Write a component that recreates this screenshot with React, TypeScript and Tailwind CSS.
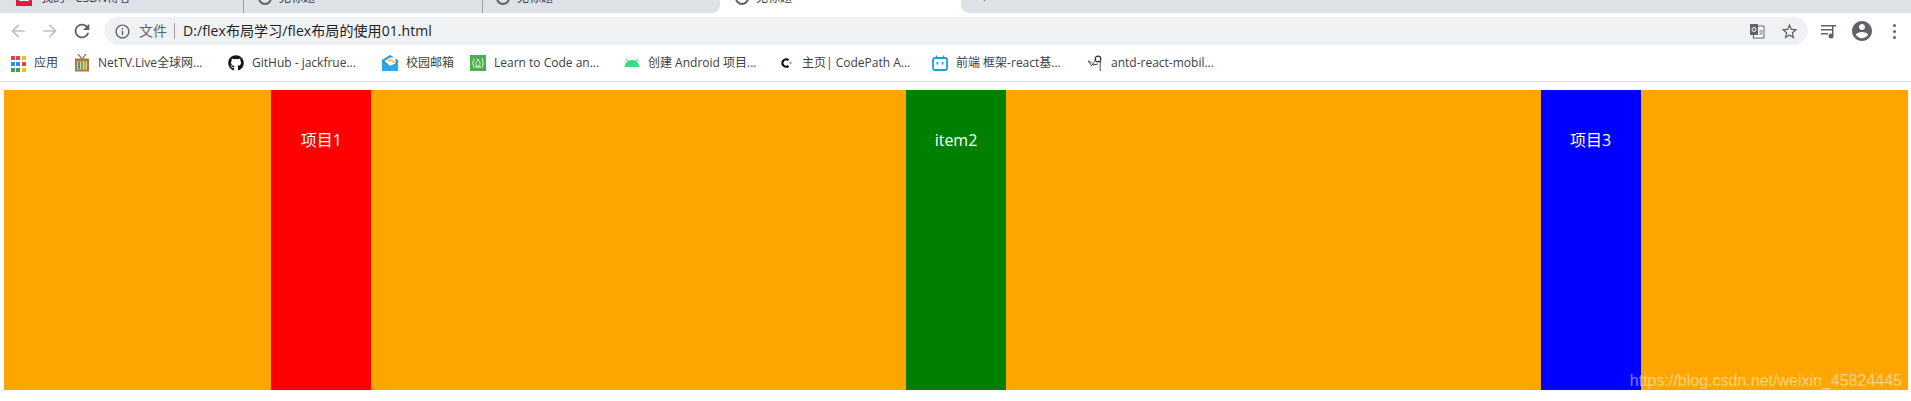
import * as React from "react";
import { FaGithub } from "react-icons/fa";

const uiFont = "font-['Open_Sans','Noto_Sans_CJK_SC',sans-serif]";

function Glyph({ d, size = 16, className = "" }: { d: string; size?: number; className?: string }) {
  return (
    <svg width={size} height={size} viewBox="0 0 24 24" fill="currentColor" className={className}>
      <path d={d} />
    </svg>
  );
}

const arrowLeft = "M20 11H7.83l5.59-5.59L12 4l-8 8 8 8 1.41-1.41L7.83 13H20v-2z";
const arrowRight = "M4 11h12.17l-5.59-5.59L12 4l8 8-8 8-1.41-1.41L16.17 13H4v-2z";
const reload =
  "M17.65 6.35C16.2 4.9 14.21 4 12 4c-4.42 0-7.99 3.58-7.99 8s3.57 8 7.99 8c3.73 0 6.84-2.55 7.73-6h-2.08c-.82 2.33-3.04 4-5.65 4-3.31 0-6-2.69-6-6s2.69-6 6-6c1.66 0 3.14.69 4.22 1.78L13 11h7V4l-2.35 2.35z";
const info =
  "M11 7h2v2h-2zm0 4h2v6h-2zm1-9C6.48 2 2 6.48 2 12s4.48 10 10 10 10-4.48 10-10S17.52 2 12 2zm0 18c-4.41 0-8-3.59-8-8s3.59-8 8-8 8 3.59 8 8-3.59 8-8 8z";
const star =
  "M22 9.24l-7.19-.62L12 2 9.19 8.63 2 9.24l5.46 4.73L5.82 21 12 17.27 18.18 21l-1.63-7.03L22 9.24zM12 15.4l-3.76 2.27 1-4.28-3.32-2.88 4.38-.38L12 6.1l1.71 4.04 4.38.38-3.32 2.88 1 4.28L12 15.4z";
const account =
  "M12 2C6.48 2 2 6.48 2 12s4.48 10 10 10 10-4.48 10-10S17.52 2 12 2zm0 3c1.66 0 3 1.34 3 3s-1.34 3-3 3-3-1.34-3-3 1.34-3 3-3zm0 14.2c-2.5 0-4.71-1.28-6-3.22.03-1.99 4-3.08 6-3.08 1.99 0 5.97 1.09 6 3.08-1.29 1.94-3.5 3.22-6 3.22z";

function TranslateIcon() {
  return (
    <svg width="16" height="16" viewBox="0 0 16 16">
      <path d="M7 3h8v12H4z" fill="#fff" stroke="#5f6368" strokeWidth="1" />
      <rect x="1" y="1" width="8" height="11" fill="#5f6368" />
      <circle cx="5" cy="6.5" r="2" fill="none" stroke="#fff" strokeWidth="1" />
      <path d="M10 8h4M12 7v1M10.5 12l3-3M10.5 9l3 3" stroke="#5f6368" strokeWidth="0.8" fill="none" />
    </svg>
  );
}

function QueueIcon() {
  return (
    <svg width="16" height="16" viewBox="0 0 16 16" fill="#5f6368">
      <rect x="0" y="2" width="11" height="1.5" />
      <rect x="0" y="6" width="11" height="1.5" />
      <rect x="0" y="10" width="7" height="1.5" />
      <rect x="11" y="2" width="1.5" height="11" />
      <rect x="11" y="2" width="4" height="1.5" />
      <circle cx="10" cy="13" r="2.5" />
    </svg>
  );
}

function AppsIcon() {
  const colors = ["#ea4335", "#ea4335", "#fbbc04", "#4285f4", "#4285f4", "#ea4335", "#34a853", "#34a853", "#fbbc04"];
  return (
    <div className="grid grid-cols-3 gap-[2px] w-[14px] h-[14px]">
      {colors.map((c, i) => (
        <svg key={i} width="4" height="4">
          <rect width="4" height="4" fill={c} />
        </svg>
      ))}
    </div>
  );
}

function TvIcon() {
  return (
    <svg width="16" height="18" viewBox="0 0 16 18">
      <path d="M4 0l4 5 4-5" stroke="#7a6a45" strokeWidth="1.2" fill="none" />
      <rect x="1" y="4.5" width="14" height="13" fill="#a87a3c" />
      <rect x="3" y="7.5" width="10" height="8" fill="#d9d2a8" />
      <rect x="4" y="8" width="2" height="7" fill="#4f8fb0" />
      <rect x="7" y="8" width="2" height="7" fill="#7ba84a" />
      <rect x="10" y="8" width="2" height="7" fill="#d9a63c" />
    </svg>
  );
}

function MailIcon() {
  return (
    <svg width="16" height="16" viewBox="0 0 16 16">
      <path d="M0 5L8 0l8 5v11H0z" fill="#1d9be6" />
      <path d="M2.500 6L8 2.500h5.500v6L8 11z" fill="#ffffff" />
      <path d="M6 6c3-2 5-1 6 2" stroke="#f5b52e" strokeWidth="1.6" fill="none" />
      <path d="M0 7l8 5 8-5v9H0z" fill="#2ba7ef" />
    </svg>
  );
}

function LearnIcon() {
  return (
    <svg width="16" height="16" viewBox="0 0 16 16">
      <rect width="16" height="16" fill="#4caf50" />
      <path d="M4 3.5L2.8 8 4 12.5M12 3.5L13.2 8 12 12.5" stroke="#fff" strokeWidth="0.9" fill="none" />
      <path d="M8 4c.6 2 2 2.6 2 4.6S8.8 11 8 11s-2-.6-2-2.4C6 7 7.4 6.2 8 4z" fill="none" stroke="#fff" strokeWidth="0.9" />
      <rect x="5" y="11.5" width="6" height="1" fill="#fff" />
    </svg>
  );
}

function AndroidIcon() {
  return (
    <svg width="16" height="16" viewBox="0 0 16 16">
      <path d="M0.5 12C1 7.5 4 5 8 5s7 2.500 7.500 7z" fill="#3ddc84" />
      <path d="M4 6.500L2.500 4M12 6.500L13.500 4" stroke="#3ddc84" strokeWidth="1" />
    </svg>
  );
}

function CodePathIcon() {
  return (
    <svg width="16" height="16" viewBox="0 0 16 16">
      <path d="M10.500 5.200A3.700 3.700 0 1 0 10.500 10.800" stroke="#111" strokeWidth="2.200" fill="none" />
      <circle cx="12.500" cy="8" r="1.300" fill="#5fd0a0" />
    </svg>
  );
}

function BiliIcon() {
  return (
    <svg width="16" height="16" viewBox="0 0 16 16">
      <path d="M4 0.500L5.500 3M12 0.500L10.500 3" stroke="#1a9fd9" strokeWidth="1.300" />
      <rect x="1" y="3" width="14" height="12" rx="2" fill="none" stroke="#1a9fd9" strokeWidth="1.800" />
      <rect x="4.500" y="7" width="1.800" height="2.500" fill="#1a9fd9" />
      <rect x="9.700" y="7" width="1.800" height="2.500" fill="#1a9fd9" />
    </svg>
  );
}

function AntIcon() {
  return (
    <svg width="16" height="18" viewBox="0 0 16 18">
      <path d="M1 7c2 0 4 2 5 4 1-2 1-3 3-6" stroke="#555" strokeWidth="1" fill="none" />
      <circle cx="11" cy="5" r="2.800" fill="none" stroke="#333" strokeWidth="1.200" />
      <path d="M13.500 7c0 4-1 6 0 10M6 11l5-1M1 7l4 5" stroke="#444" strokeWidth="1" fill="none" />
    </svg>
  );
}

const bookmarks: { icon: React.ReactNode; label: string; w: string }[] = [
  { icon: <TvIcon />, label: "NetTV.Live全球网...", w: "w-[108px]" },
  { icon: <FaGithub size={16} color="#161614" />, label: "GitHub - jackfrue...", w: "w-[108px]" },
  { icon: <MailIcon />, label: "校园邮箱", w: "w-[42px]" },
  { icon: <LearnIcon />, label: "Learn to Code an...", w: "w-[108px]" },
  { icon: <AndroidIcon />, label: "创建 Android 项目...", w: "w-[108px]" },
  { icon: <CodePathIcon />, label: "主页| CodePath A...", w: "w-[108px]" },
  { icon: <BiliIcon />, label: "前端 框架-react基...", w: "w-[109px]" },
  { icon: <AntIcon />, label: "antd-react-mobil...", w: "w-[108px]" },
];

function TabStub({ left, icon, text, gap = "gap-[6px]" }: { left: string; icon: React.ReactNode; text: string; gap?: string }) {
  return (
    <div className={`flex items-center h-[13px] overflow-hidden ${left}`}>
      <div className={`-mt-[18px] flex items-center ${gap}`}>
        {icon}
        <span className="text-[12px] leading-[16px] text-[#3c4043] whitespace-nowrap">{text}</span>
      </div>
    </div>
  );
}

const ring = (
  <svg width="16" height="16" viewBox="0 0 16 16">
    <circle cx="8" cy="8" r="6" fill="none" stroke="#5f6368" strokeWidth="2" />
  </svg>
);

export default function App() {
  return (
    <div className={`w-[1911px] h-[401px] bg-white overflow-hidden ${uiFont}`}>
      {/* tab strip, only the bottom edge is in frame */}
      <div className="flex h-[13px]">
        <div className="flex w-[720px] bg-[#dee1e6] rounded-br-[8px] overflow-hidden">
          <div className="w-[244px] border-r border-[#9aa0a6]">
            <TabStub
              left="pl-[16px]"
              gap="gap-[9px]"
              icon={
                <svg width="16" height="16" viewBox="0 0 16 16">
                  <rect width="16" height="16" fill="#d9232e" />
                  <rect x="3" y="2" width="10" height="9" fill="#fff" />
                </svg>
              }
              text="我的 - CSDN博客"
            />
          </div>
          <div className="w-[239px] border-r border-[#9aa0a6]">
            <TabStub left="pl-[13px]" icon={ring} text="无标题" />
          </div>
          <div className="flex-1">
            <TabStub left="pl-[12px]" icon={ring} text="无标题" />
          </div>
        </div>
        <div className="w-[241px]">
          <TabStub left="pl-[14px]" icon={ring} text="无标题" />
        </div>
        <div className="flex-1 bg-[#dee1e6] rounded-bl-[8px]">
          <TabStub left="pl-[20px]" icon={<span className="text-[12px] text-[#3c4043]">+</span>} text="" />
        </div>
      </div>

      {/* toolbar */}
      <div className="flex items-center h-[28px] mt-[4px]">
        <div className="flex items-center pl-[2px] pr-[6px]">
          <div className="w-[32px] flex justify-center text-[#bdc1c6]"><Glyph d={arrowLeft} size={20} /></div>
          <div className="w-[32px] flex justify-center text-[#bdc1c6]"><Glyph d={arrowRight} size={20} /></div>
          <div className="w-[32px] flex justify-center text-[#5f6368]"><Glyph d={reload} size={22} /></div>
        </div>
        <div className="flex-1 h-full flex items-center bg-[#eff1f3] rounded-full pl-[10px]">
          <Glyph d={info} size={17} className="text-[#5f6368]" />
          <span className="ml-[8px] text-[14px] leading-[20px] -mt-[1px] text-[#5f6368]">文件</span>
          <div className="ml-[7px] w-px h-[16px] bg-[#9aa0a6]" />
          <span className="ml-[8px] text-[14px] leading-[20px] -mt-[1px] tracking-[0.08px] text-[#202124] whitespace-nowrap">D:/flex布局学习/flex布局的使用01.html</span>
          <div className="ml-auto flex items-center pr-[2px]">
            <div className="w-[33px] flex justify-center"><TranslateIcon /></div>
            <div className="w-[33px] flex justify-center text-[#5f6368]"><Glyph d={star} size={19} /></div>
          </div>
        </div>
        <div className="flex items-center pl-[4px]">
          <div className="w-[33px] flex justify-center"><QueueIcon /></div>
          <div className="w-[33px] flex justify-center text-[#5f6368]"><Glyph d={account} size={24} /></div>
          <div className="w-[33px] flex flex-col items-center gap-[3px]">
            <div className="w-[3px] h-[3px] rounded-full bg-[#5f6368]" />
            <div className="w-[3px] h-[3px] rounded-full bg-[#5f6368]" />
            <div className="w-[3px] h-[3px] rounded-full bg-[#5f6368]" />
          </div>
        </div>
      </div>

      {/* bookmarks bar */}
      <div className="flex items-center h-[37px] border-b border-[#dadce0] pl-[11px] text-[12px] text-[#3c4043]">
        <div className="flex items-center mr-[17px]">
          <AppsIcon />
          <span className="ml-[9px] w-[23px] whitespace-nowrap">应用</span>
        </div>
        <div className="flex items-center gap-[22px]">
          {bookmarks.map((b) => (
            <div key={b.label} className="flex items-center gap-[8px]">
              <div className="w-[16px] flex justify-center">{b.icon}</div>
              <span className={`${b.w} whitespace-nowrap`}>{b.label}</span>
            </div>
          ))}
        </div>
      </div>

      {/* flex demo page */}
      <div className="relative mt-[8px] ml-[4px] w-[1904px] h-[300px] flex justify-around bg-[#ffa500]">
        <div className="w-[100px] h-full leading-[100px] text-center text-white text-[16px] bg-[#ff0000]">项目1</div>
        <div className="w-[100px] h-full leading-[100px] text-center text-white text-[16px] bg-[#008000]">item2</div>
        <div className="w-[100px] h-full leading-[100px] text-center text-white text-[16px] bg-[#0000ff]">项目3</div>
        <span className="absolute right-[6px] bottom-0 text-[16px] leading-[18px] text-white/50 font-['Liberation_Sans',sans-serif] whitespace-nowrap">
          https://blog.csdn.net/weixin_45824445
        </span>
      </div>
    </div>
  );
}
